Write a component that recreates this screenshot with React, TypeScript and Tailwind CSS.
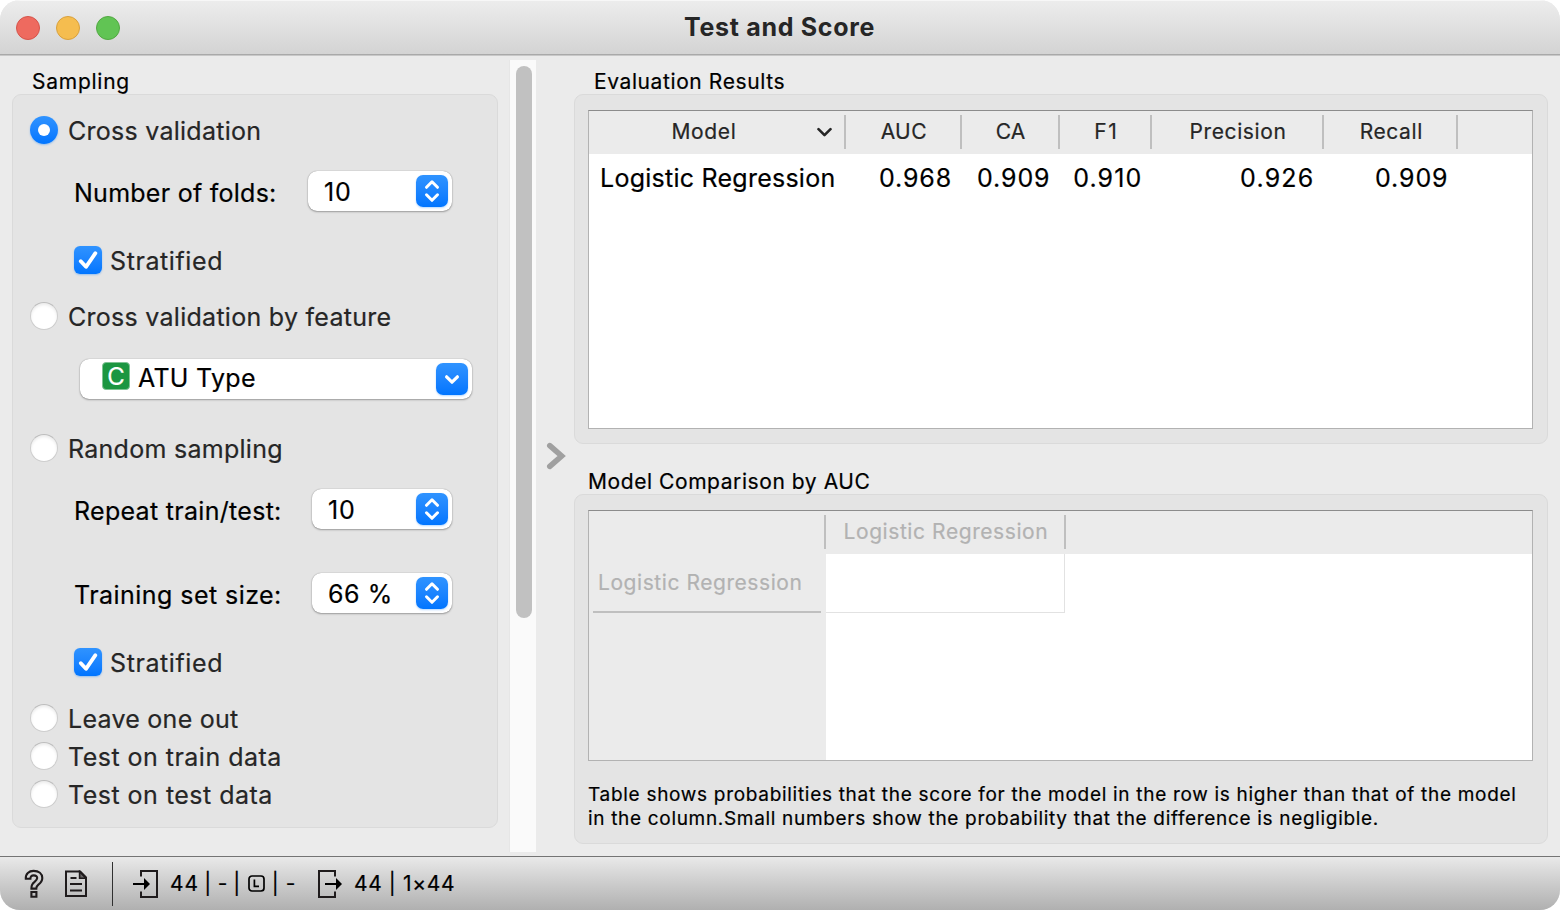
import React from "react";

function Radio({ label, checked, className = "", textClass = "" }: { label: string; checked?: boolean; className?: string; textClass?: string }) {
  return (
    <div className={`flex h-7 items-start ${className}`}>
      {checked ? (
        <span className="flex size-7 items-center justify-center rounded-full bg-linear-to-b from-[#2f93ff] to-[#0075ff] shadow-[0_1px_2px_rgba(0,122,255,0.35)]">
          <span className="size-3 rounded-full bg-white" />
        </span>
      ) : (
        <span className="size-7 rounded-full border border-[#cdcdcd] border-t-[#bdbdbd] bg-white shadow-[inset_0_2px_3px_rgba(0,0,0,0.08)]" />
      )}
      <span className={`ml-[10px] text-[25px] leading-[30px] whitespace-nowrap text-[#262626] ${textClass}`}>{label}</span>
    </div>
  );
}

function Check({ label, className = "" }: { label: string; className?: string }) {
  return (
    <div className={`ml-[44px] flex h-7 items-start ${className}`}>
      <span className="flex size-7 items-center justify-center rounded-[6px] bg-linear-to-b from-[#2f93ff] to-[#0075ff] shadow-[0_1px_2px_rgba(0,122,255,0.35)]">
        <svg width="28" height="28" viewBox="0 0 28 28" fill="none" stroke="white" strokeWidth="3.8" strokeLinecap="round" strokeLinejoin="round">
          <path d="M6.8 15.2 L12 20.8 L21.4 7.2" />
        </svg>
      </span>
      <span className="ml-[8px] text-[25px] leading-[30px] tracking-[0.6px] whitespace-nowrap text-[#262626]">{label}</span>
    </div>
  );
}

function BlueButton({ children }: { children: React.ReactNode }) {
  return (
    <span className="mr-1 flex size-8 items-center justify-center rounded-[7px] bg-linear-to-b from-[#2f93ff] to-[#0075ff] shadow-[0_1px_2px_rgba(0,122,255,0.3)]">
      {children}
    </span>
  );
}

function Spin({ label, value, className, labelClass, boxClass, valueClass }: { label: string; value: string; className: string; labelClass: string; boxClass: string; valueClass: string }) {
  return (
    <div className={`mr-[45px] ml-[44px] flex h-10 items-center justify-between ${className}`}>
      <span className={`pt-1 text-[25px] leading-[40px] whitespace-nowrap text-black ${labelClass}`}>{label}</span>
      <div className={`flex h-10 items-center justify-between rounded-[9px] bg-white pl-4 shadow-[0_0_1px_rgba(0,0,0,0.4),0_1px_2px_rgba(0,0,0,0.3)] ${boxClass}`}>
        <span className={`pt-[2px] text-[25px] leading-[40px] whitespace-nowrap text-black ${valueClass}`}>{value}</span>
        <BlueButton>
          <svg width="32" height="32" viewBox="0 0 32 32" fill="none" stroke="white" strokeWidth="3" strokeLinecap="round" strokeLinejoin="round">
            <path d="M10.5 12.3 L16 6.8 L21.5 12.3 M10.5 19.8 L16 25.3 L21.5 19.8" />
          </svg>
        </BlueButton>
      </div>
    </div>
  );
}

const columns = [
  { name: "AUC", value: "0.968", col: "w-[116px]", head: "pl-[1.5px] tracking-[0.4px]", cell: "tracking-[0.85px] pr-[10px]" },
  { name: "CA", value: "0.909", col: "w-[98px]", head: "pl-[1px] tracking-[0.07px]", cell: "tracking-[0.9px] pr-[9.5px]" },
  { name: "F1", value: "0.910", col: "w-[92px]", head: "pl-[2.5px] tracking-[1.6px]", cell: "tracking-[1.15px] pr-[9.5px]" },
  { name: "Precision", value: "0.926", col: "w-[172px]", head: "pl-[2px] tracking-[0.6px]", cell: "tracking-[1.2px] pr-[9.5px]" },
  { name: "Recall", value: "0.909", col: "w-[134px]", head: "pl-[2.5px] tracking-[0.6px]", cell: "tracking-[0.9px] pr-[9.5px]" },
];

const Separator = () => <span className="mt-1 h-[34px] w-[2px] shrink-0 bg-[#bfbfbf]" />;

const frame = "border border-[#b2b2b2] border-t-[#8c8c8c] bg-white";
const group = "rounded-[9px] border border-[#dadada] bg-[#e4e4e4]";

export default function App() {
  return (
    <div className="flex h-[910px] w-[1560px] flex-col overflow-hidden rounded-[20px] bg-[#ebebeb] font-['Inter',sans-serif] text-black [-webkit-text-stroke:0.2px]">
      <header className="flex h-14 shrink-0 border-b border-[#c8c8c8] bg-linear-to-b from-[#ededed] to-[#d3d3d3]">
        <div className="flex flex-1 border-b border-[#a9a9a9] shadow-[inset_0_1px_0_#f7f7f7]">
          <div className="flex w-[684px] gap-4 pt-4 pl-4">
            <span className="size-6 rounded-full border border-[#d5544b] bg-[#ee6a5f]" />
            <span className="size-6 rounded-full border border-[#d8a03d] bg-[#f5bd4f]" />
            <span className="size-6 rounded-full border border-[#52a842] bg-[#61c454]" />
          </div>
          <h1 className="text-[25px] leading-[54px] font-bold tracking-[0.7px] whitespace-nowrap text-[#262626] [-webkit-text-stroke:0px]">Test and Score</h1>
        </div>
      </header>

      <main className="flex h-[800px] shrink-0">
        <section className="w-[509px] pl-3">
          <h2 className="h-[38px] pt-[10px] pl-5 text-[21px] leading-[31px] tracking-[0.75px]">Sampling</h2>
          <div className={`h-[734px] w-[486px] pt-[21px] pl-[17px] ${group}`}>
            <Radio checked label="Cross validation" textClass="tracking-[0.26px]" />
            <Spin label="Number of folds:" value="10" className="mt-[27px]" labelClass="tracking-[0.26px]" boxClass="w-36" valueClass="tracking-[0.9px]" />
            <Check label="Stratified" className="mt-[35px]" />
            <Radio label="Cross validation by feature" className="mt-7" textClass="tracking-[0.275px]" />
            <div className="mt-[29px] ml-[50px] flex h-10 w-[392px] items-center rounded-[9px] bg-white pl-[22px] shadow-[0_0_1px_rgba(0,0,0,0.4),0_1px_2px_rgba(0,0,0,0.3)]">
              <span className="mb-[6px] flex size-7 items-center justify-center rounded-[4px] border border-[#7fc394] bg-[#1b9641] pt-px text-[24px] leading-[26px] text-white">C</span>
              <span className="ml-[8px] flex-1 pb-[2px] text-[25px] leading-[40px] tracking-[0.3px]">ATU Type</span>
              <BlueButton>
                <svg width="32" height="32" viewBox="0 0 32 32" fill="none" stroke="white" strokeWidth="3.2" strokeLinecap="round" strokeLinejoin="round">
                  <path d="M10.6 13.8 L16 19.2 L21.4 13.8" />
                </svg>
              </BlueButton>
            </div>
            <Radio label="Random sampling" className="mt-[35px]" textClass="tracking-[0.28px]" />
            <Spin label="Repeat train/test:" value="10" className="mt-[27px]" labelClass="tracking-[0.3px]" boxClass="w-35" valueClass="tracking-[0.9px]" />
            <Spin label="Training set size:" value="66 %" className="mt-11" labelClass="tracking-[0.45px]" boxClass="w-35" valueClass="tracking-[0.6px]" />
            <Check label="Stratified" className="mt-[35px]" />
            <Radio label="Leave one out" className="mt-7" textClass="tracking-[0.26px]" />
            <Radio label="Test on train data" className="mt-[10px]" textClass="tracking-[0.48px]" />
            <Radio label="Test on test data" className="mt-[10px]" textClass="tracking-[0.49px]" />
          </div>
        </section>

        <div className="mt-1 h-[792px] w-[27px] border-l border-[#e6e6e6] bg-[#fafafa] pt-[6px] pl-[6px]">
          <div className="h-[552px] w-4 rounded-full bg-[#c1c1c1]" />
        </div>

        <div className="w-[38px] pt-[386px] pl-[10px]">
          <svg width="20" height="28" viewBox="0 0 20 28" fill="none" stroke="#a0a0a0" strokeWidth="5.6" strokeLinecap="round" strokeLinejoin="miter">
            <path d="M3.8 3.7 L15.6 14 L3.8 24.3" />
          </svg>
        </div>

        <section className="w-[974px]">
          <h2 className="h-[38px] pt-[10px] pl-5 text-[21px] leading-[31px] tracking-[0.6px]">Evaluation Results</h2>
          <div className={`h-[350px] p-[13px] pt-[15px] ${group}`}>
            <div className={`h-[319px] w-[945px] ${frame}`}>
              <div className="flex h-[43px] bg-[#ebebeb] text-[21px] leading-[41px] text-[#262626]">
                <div className="flex w-[257px]">
                  <span className="w-[227.5px] pl-[82.5px] tracking-[0.65px]">Model</span>
                  <svg className="mt-[12px] mr-[12.5px]" width="15" height="18" viewBox="0 0 15 18" fill="none" stroke="#262626" strokeWidth="2.6" strokeLinecap="round" strokeLinejoin="round">
                    <path d="M1.5 6.2 L7.5 12.2 L13.5 6.2" />
                  </svg>
                  <Separator />
                </div>
                {columns.map((c) => (
                  <div key={c.name} className={`flex ${c.col}`}>
                    <span className={`flex-1 text-center ${c.head}`}>{c.name}</span>
                    <Separator />
                  </div>
                ))}
              </div>
              <div className="flex text-[25px] leading-[48px]">
                <span className="w-[257px] pl-[11px] tracking-[0.25px]">Logistic Regression</span>
                {columns.map((c) => (
                  <span key={c.name} className={`text-right ${c.col} ${c.cell}`}>{c.value}</span>
                ))}
              </div>
            </div>
          </div>

          <h2 className="h-[50px] pt-[22px] pl-[14px] text-[21px] leading-[31px] tracking-[0.57px]">Model Comparison by AUC</h2>
          <div className={`h-[350px] pt-[15px] pl-[13px] ${group}`}>
            <div className={`flex h-[251px] w-[945px] ${frame}`}>
              <div className="w-[237px] bg-[#ebebeb] pt-[43px] text-[21px] leading-[57px] tracking-[0.56px] text-[#b2b2b2]">
                <div className="mr-[5px] ml-1 h-[59px] border-b-2 border-[#bfbfbf] pl-[5px]">Logistic Regression</div>
              </div>
              <div className="flex-1">
                <div className="-ml-[2px] flex h-[43px] bg-[#ebebeb] text-[21px] leading-[41px] tracking-[0.58px] text-[#b2b2b2]">
                  <Separator />
                  <span className="w-[238px] pl-[17.5px]">Logistic Regression</span>
                  <Separator />
                </div>
                <div className="h-[59px] w-[239px] border-r border-b border-[#e2e2e2]" />
              </div>
            </div>
            <p className="mt-[22px] text-[19px] leading-6 tracking-[0.7px] whitespace-nowrap">
              Table shows probabilities that the score for the model in the row is higher than that of the model
              <br />
              <span className="tracking-[0.68px]">in the column.Small numbers show the probability that the difference is negligible.</span>
            </p>
          </div>
        </section>
      </main>

      <footer className="flex h-[54px] shrink-0 items-center border-t border-[#747474] bg-linear-to-b from-[#e9e9e9] to-[#b0b0b0] text-[21px] leading-[53px]">
        <svg className="ml-6" width="20" height="30" viewBox="0 0 20 30" fill="none" stroke="#1f1b1c" strokeWidth="2.1">
          <path d="M1.8 9.8 C1.4 4.6 5 1.9 9.6 1.9 C14.8 1.9 18.3 4.8 18.3 9 C18.3 12.2 16.6 14 14.4 15.6 C12.6 17 12.3 17.6 12.3 19.6 L7.4 19.6 C7.2 16.6 8.2 14.6 10.6 12.8 C12.4 11.4 13.2 10.6 13.2 9 C13.2 7.4 12 6.4 9.8 6.4 C7.4 6.4 6.4 7.6 6.4 9.8 Z M7.4 23 H12.4 V27.8 H7.4 Z" />
        </svg>
        <svg className="ml-[21px]" width="22" height="28" viewBox="0 0 22 28" fill="none" stroke="#1f1b1c" strokeWidth="2">
          <path d="M1 1.5 H15.2 L21 7.5 V26 H1 Z M5.5 8 H11.5 M5 14 H17 M5 20.4 H17" />
          <path d="M14.6 1.5 L21 8.2 H14.6 Z" fill="#1f1b1c" fillOpacity="0.6" strokeWidth="1.6" />
        </svg>
        <span className="ml-[25px] h-11 w-px bg-[#303030]" />
        <svg className="ml-5" width="26" height="30" viewBox="0 0 26 30" fill="none" stroke="#1f1b1c" strokeWidth="2">
          <path d="M8 7.5 V2 H24 V28 H8 V22.5" />
          <path d="M0 15 H12" stroke="black" />
          <path d="M11 9 L17 15 L11 21 Z" fill="black" stroke="none" />
        </svg>
        <span className="ml-[11px] tracking-[1px]">44</span>
        <span className="ml-[5px]">|</span>
        <span className="ml-[6.5px]">-</span>
        <span className="ml-[6px]">|</span>
        <svg className="ml-[7.5px]" width="17" height="17" viewBox="0 0 17 17" fill="none" stroke="black" strokeWidth="1.7">
          <rect x="1" y="1" width="15" height="15" rx="3" />
          <path d="M6.4 4.6 V11.4 H11" />
        </svg>
        <span className="ml-[7px]">|</span>
        <span className="ml-[7px]">-</span>
        <svg className="ml-[22.5px]" width="26" height="30" viewBox="0 0 26 30" fill="none" stroke="#1f1b1c" strokeWidth="2">
          <path d="M17 7.5 V2 H1 V28 H17 V22.5" />
          <path d="M7 15 H19" stroke="black" />
          <path d="M18 9 L24 15 L18 21 Z" fill="black" stroke="none" />
        </svg>
        <span className="ml-[10px] tracking-[0.63px]">44 | 1×44</span>
      </footer>
    </div>
  );
}
